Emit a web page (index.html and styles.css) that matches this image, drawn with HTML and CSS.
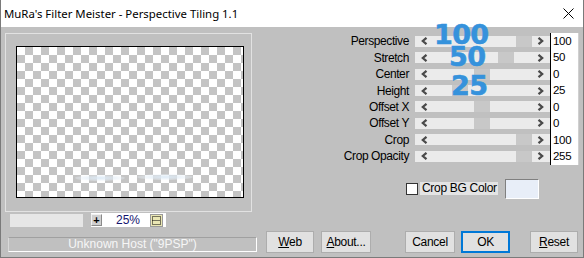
FILE: index.html
```html
<!DOCTYPE html>
<html lang="en">
<head>
    <meta charset="UTF-8">
    <title>MuRa's Filter Meister - Perspective Tiling 1.1</title>
    <link rel="stylesheet" href="styles.css">
</head>
<body>
    <div class="window">
        <div class="titlebar">
            <span class="title">MuRa's Filter Meister - Perspective Tiling 1.1</span>
            <svg class="close" width="11" height="11" viewBox="0 0 11 11">
                <path d="M0.5 0.5 L10.5 10.5 M10.5 0.5 L0.5 10.5" stroke="#000" stroke-width="1" fill="none"/>
            </svg>
        </div>
        <div class="client">
            <div class="main">
                <div class="left">
                    <div class="preview-frame">
                        <div class="preview">
                            <span class="blob blob-a"></span>
                            <span class="blob blob-b"></span>
                        </div>
                    </div>
                    <div class="zoombar">
                        <div class="zoom-empty"></div>
                        <div class="zoom-ctrl">
                            <span class="plus">+</span>
                            <span class="pct">25%</span>
                            <svg class="fit" width="13" height="13" viewBox="0 0 13 13">
                                <rect x="0.5" y="0.5" width="12" height="12" fill="#e9e6b4" stroke="#9a9a9a"/>
                                <rect x="2.5" y="2.5" width="8" height="8" fill="none" stroke="#000" stroke-dasharray="1 1"/>
                                <path d="M2.5 6.5 H10.5" stroke="#000" stroke-dasharray="1 1"/>
                            </svg>
                        </div>
                    </div>
                </div>
                <div class="right">
                    <div class="sliders">
                        <!-- rows are filled in by the script below -->
                    </div>
                    <div class="bgrow">
                        <span class="check"></span>
                        <span class="check-label">Crop BG Color</span>
                        <span class="swatch"></span>
                    </div>
                    <span class="big big-100">100</span>
                    <span class="big big-50">50</span>
                    <span class="big big-25">25</span>
                </div>
            </div>
            <div class="bottom">
                <div class="status">Unknown Host ("9PSP")</div>
                <button class="btn btn-web"><u>W</u>eb</button>
                <button class="btn btn-about"><u>A</u>bout...</button>
                <button class="btn btn-cancel">Cancel</button>
                <button class="btn btn-ok">OK</button>
                <button class="btn btn-reset"><u>R</u>eset</button>
            </div>
        </div>
    </div>
    <script>
        const controles = [
            { nombre: "Perspective", valor: "100", pos: 101 },
            { nombre: "Stretch", valor: "50", pos: 83 },
            { nombre: "Center", valor: "0", pos: 59 },
            { nombre: "Height", valor: "25", pos: 37 },
            { nombre: "Offset X", valor: "0", pos: 59 },
            { nombre: "Offset Y", valor: "0", pos: 59 },
            { nombre: "Crop", valor: "100", pos: 101 },
            { nombre: "Crop Opacity", valor: "255", pos: 101 }
        ];
        const flechaIzq = '<svg class="arrow" width="7" height="8" viewBox="0 0 7 8"><path d="M5.5 0.8 L1.8 4 L5.5 7.2" stroke="#4a4a4a" stroke-width="2.2" fill="none"/></svg>';
        const flechaDer = '<svg class="arrow" width="7" height="8" viewBox="0 0 7 8"><path d="M1.5 0.8 L5.2 4 L1.5 7.2" stroke="#4a4a4a" stroke-width="2.2" fill="none"/></svg>';
        const contenedor = document.querySelector('.sliders');
        controles.forEach(c => {
            const label = document.createElement('span');
            label.className = 'label';
            label.textContent = c.nombre;
            const track = document.createElement('div');
            track.className = 'track';
            track.innerHTML = flechaIzq + '<span class="thumb" style="left:' + c.pos + 'px"></span>' + flechaDer;
            const val = document.createElement('span');
            val.className = 'val';
            val.textContent = c.valor;
            contenedor.append(label, track, val);
        });
    </script>
</body>
</html>
```

FILE: styles.css
```css
body {
    margin: 0;
    padding: 0;
    background: #c0c0c0;
    font-family: "Liberation Sans", Arial, sans-serif;
    font-size: 12px;
}
.window {
    width: 584px;
    height: 258px;
    box-sizing: border-box;
    border: 1px solid #7a7a7a;
    border-top: none;
    display: flex;
    flex-direction: column;
    background: #c0c0c0;
    overflow: hidden;
}
.titlebar {
    height: 27px;
    flex: none;
    background: #fff;
    display: flex;
    align-items: center;
    justify-content: space-between;
    padding: 0 9px 0 3px;
}
.title {
    font-family: "Noto Sans", "Open Sans", sans-serif;
    font-size: 11.4px;
    color: #000;
}
.close {
    display: block;
}
.client {
    flex: 1;
    display: flex;
    flex-direction: column;
}
.main {
    flex: 1;
    display: flex;
}
.left {
    width: 252px;
    flex: none;
}
.preview-frame {
    margin: 6px 0 0 4px;
    width: 247px;
    height: 179px;
    box-sizing: border-box;
    border: 1px solid #e2e2e2;
    padding: 12px 0 0 10px;
}
.preview {
    width: 228px;
    height: 152px;
    box-sizing: border-box;
    border: 1px solid #000;
    background: repeating-conic-gradient(#c4c4c4 0 25%, #fff 0 50%) 0 0 / 16px 16px;
    position: relative;
}
.blob {
    position: absolute;
    height: 6px;
    border-radius: 50%;
    background: radial-gradient(ellipse at center, rgba(220, 234, 246, 0.95) 0%, rgba(235, 243, 250, 0.4) 60%, rgba(255, 255, 255, 0) 100%);
}
.blob-a {
    left: 58px;
    top: 128px;
    width: 50px;
}
.blob-b {
    left: 120px;
    top: 127px;
    width: 56px;
}
.zoombar {
    display: flex;
    align-items: center;
    margin: 1px 0 0 9px;
    gap: 8px;
}
.zoom-empty {
    width: 73px;
    height: 13px;
    background: #e6e6e6;
}
.zoom-ctrl {
    width: 75px;
    height: 14px;
    background: #fff;
    display: flex;
    align-items: center;
}
.plus {
    width: 11px;
    height: 12px;
    box-sizing: border-box;
    background: #d0d0d0;
    border: 1px solid #8a8a8a;
    border-top-color: #f0f0f0;
    border-left-color: #f0f0f0;
    font-weight: bold;
    font-size: 11px;
    line-height: 10px;
    text-align: center;
    color: #000;
}
.pct {
    margin-left: 14px;
    color: #14146e;
    font-size: 12px;
    width: 34px;
}
.fit {
    display: block;
}
.right {
    flex: 1;
    position: relative;
    padding: 6px 4px 0 0;
}
.sliders {
    display: grid;
    grid-template-columns: 1fr 135px 29px;
    grid-auto-rows: 16.45px;
    align-items: center;
}
.label {
    text-align: right;
    padding-right: 6px;
    letter-spacing: -0.4px;
    color: #000;
    white-space: nowrap;
}
.track {
    height: 11px;
    background: #ebebeb;
    position: relative;
    display: flex;
    align-items: center;
    justify-content: space-between;
    padding: 0 6px;
    margin-right: 8px;
    width: 135px;
    box-sizing: border-box;
}
.arrow {
    display: block;
    position: relative;
    z-index: 1;
}
.thumb {
    position: absolute;
    top: 0;
    width: 16px;
    height: 11px;
    background: #c8c8c8;
}
.val {
    height: 100%;
    box-sizing: border-box;
    background: #fff;
    border-left: 1px solid #000;
    border-right: 1px solid #d0d0d0;
    padding-left: 2px;
    font-size: 11.5px;
    letter-spacing: -0.3px;
    line-height: 16px;
    color: #000;
}
.sliders .val:first-of-type {
    border-top: 1px solid #000;
}
.bgrow {
    display: flex;
    align-items: center;
    margin: 14px 0 0 153px;
}
.check {
    width: 12px;
    height: 12px;
    box-sizing: border-box;
    background: #fff;
    border: 1px solid #333;
}
.check-label {
    margin-left: 2px;
    width: 78px;
    height: 13px;
    background: #e4e4e4;
    padding-left: 2px;
    box-sizing: border-box;
    line-height: 13px;
    letter-spacing: -0.3px;
}
.swatch {
    margin-left: 7px;
    width: 34px;
    height: 20px;
    box-sizing: border-box;
    background: #e8eef8;
    border: 1px solid #fff;
    border-top-color: #808080;
    border-left-color: #808080;
}
.big {
    position: absolute;
    font-family: "DejaVu Sans", sans-serif;
    font-weight: bold;
    font-size: 27px;
    line-height: 1;
    letter-spacing: -0.6px;
    color: #3592dc;
    -webkit-text-stroke: 0.6px #3592dc;
}
.big-100 {
    left: 181px;
    top: -6px;
}
.big-50 {
    left: 196px;
    top: 16px;
}
.big-25 {
    left: 198px;
    top: 45px;
}
.bottom {
    height: 22px;
    flex: none;
    display: flex;
    align-items: flex-start;
    margin-bottom: 4px;
}
.status {
    margin: 6px 0 0 7px;
    width: 249px;
    height: 15px;
    box-sizing: border-box;
    border: 1px solid #fff;
    border-top-color: #a0a0a0;
    border-left-color: #d8d8d8;
    color: #f6f6f6;
    text-align: center;
    line-height: 13px;
}
.btn {
    height: 22px;
    box-sizing: border-box;
    background: #e1e1e1;
    border: 1px solid #adadad;
    font-family: "Liberation Sans", Arial, sans-serif;
    font-size: 12px;
    color: #000;
    padding: 0;
    letter-spacing: -0.3px;
}
.btn-web {
    margin-left: 9px;
    width: 48px;
}
.btn-about {
    margin-left: 7px;
    width: 50px;
}
.btn-cancel {
    margin-left: 34px;
    width: 50px;
}
.btn-ok {
    margin-left: 6px;
    width: 49px;
    border-color: #0078d7;
    box-shadow: inset 0 0 0 1px #0078d7;
}
.btn-reset {
    margin-left: 20px;
    width: 48px;
}
```
